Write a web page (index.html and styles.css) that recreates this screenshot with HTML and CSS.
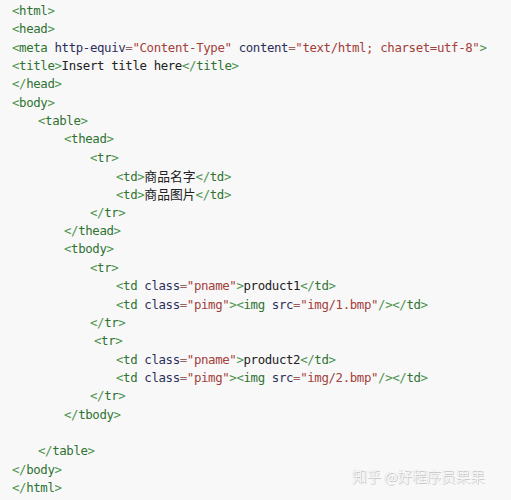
FILE: index.html
```html
<!DOCTYPE html>
<html>
<head>
<meta charset="utf-8">
<link rel="stylesheet" href="styles.css">
</head>
<body>
<div class="code">
<div class="ln l0"><span class="b">&lt;</span><span class="t">html</span><span class="b">&gt;</span></div>
<div class="ln l0"><span class="b">&lt;</span><span class="t">head</span><span class="b">&gt;</span></div>
<div class="ln l0"><span class="b">&lt;</span><span class="t">meta</span> <span class="a">http-equiv</span><span class="e">=</span><span class="v">"Content-Type"</span> <span class="a">content</span><span class="e">=</span><span class="v">"text/html; charset=utf-8"</span><span class="b">&gt;</span></div>
<div class="ln l0"><span class="b">&lt;</span><span class="t">title</span><span class="b">&gt;</span><span class="x">Insert title here</span><span class="b">&lt;/</span><span class="t">title</span><span class="b">&gt;</span></div>
<div class="ln l0"><span class="b">&lt;/</span><span class="t">head</span><span class="b">&gt;</span></div>
<div class="ln l0"><span class="b">&lt;</span><span class="t">body</span><span class="b">&gt;</span></div>
<div class="ln l1"><span class="b">&lt;</span><span class="t">table</span><span class="b">&gt;</span></div>
<div class="ln l2"><span class="b">&lt;</span><span class="t">thead</span><span class="b">&gt;</span></div>
<div class="ln l3"><span class="b">&lt;</span><span class="t">tr</span><span class="b">&gt;</span></div>
<div class="ln l4"><span class="b">&lt;</span><span class="t">td</span><span class="b">&gt;</span><span class="cjk">商品名字</span><span class="b">&lt;/</span><span class="t">td</span><span class="b">&gt;</span></div>
<div class="ln l4"><span class="b">&lt;</span><span class="t">td</span><span class="b">&gt;</span><span class="cjk">商品图片</span><span class="b">&lt;/</span><span class="t">td</span><span class="b">&gt;</span></div>
<div class="ln l3"><span class="b">&lt;/</span><span class="t">tr</span><span class="b">&gt;</span></div>
<div class="ln l2"><span class="b">&lt;/</span><span class="t">thead</span><span class="b">&gt;</span></div>
<div class="ln l2"><span class="b">&lt;</span><span class="t">tbody</span><span class="b">&gt;</span></div>
<div class="ln l3"><span class="b">&lt;</span><span class="t">tr</span><span class="b">&gt;</span></div>
<div class="ln l4"><span class="b">&lt;</span><span class="t">td</span> <span class="a">class</span><span class="e">=</span><span class="v">"pname"</span><span class="b">&gt;</span><span class="x">product1</span><span class="b">&lt;/</span><span class="t">td</span><span class="b">&gt;</span></div>
<div class="ln l4"><span class="b">&lt;</span><span class="t">td</span> <span class="a">class</span><span class="e">=</span><span class="v">"pimg"</span><span class="b">&gt;&lt;</span><span class="t">img</span> <span class="a">src</span><span class="e">=</span><span class="v">"img/1.bmp"</span><span class="b">/&gt;&lt;/</span><span class="t">td</span><span class="b">&gt;</span></div>
<div class="ln l3"><span class="b">&lt;/</span><span class="t">tr</span><span class="b">&gt;</span></div>
<div class="ln l3 nudge"><span class="b">&lt;</span><span class="t">tr</span><span class="b">&gt;</span></div>
<div class="ln l4"><span class="b">&lt;</span><span class="t">td</span> <span class="a">class</span><span class="e">=</span><span class="v">"pname"</span><span class="b">&gt;</span><span class="x">product2</span><span class="b">&lt;/</span><span class="t">td</span><span class="b">&gt;</span></div>
<div class="ln l4"><span class="b">&lt;</span><span class="t">td</span> <span class="a">class</span><span class="e">=</span><span class="v">"pimg"</span><span class="b">&gt;&lt;</span><span class="t">img</span> <span class="a">src</span><span class="e">=</span><span class="v">"img/2.bmp"</span><span class="b">/&gt;&lt;/</span><span class="t">td</span><span class="b">&gt;</span></div>
<div class="ln l3"><span class="b">&lt;/</span><span class="t">tr</span><span class="b">&gt;</span></div>
<div class="ln l2"><span class="b">&lt;/</span><span class="t">tbody</span><span class="b">&gt;</span></div>
<div class="ln l0"></div>
<div class="ln l1"><span class="b">&lt;/</span><span class="t">table</span><span class="b">&gt;</span></div>
<div class="ln l0"><span class="b">&lt;/</span><span class="t">body</span><span class="b">&gt;</span></div>
<div class="ln l0"><span class="b">&lt;/</span><span class="t">html</span><span class="b">&gt;</span></div>
</div>
<div class="mark">知乎 @好程序员果果</div>
</body>
</html>
```
FILE: styles.css
```css
html, body {
  margin: 0;
  padding: 0;
  background: #f8f8f8;
  width: 511px;
  height: 500px;
  overflow: hidden;
}
body {
  position: relative;
}
.code {
  padding: 2px 0 0 12px;
  font-family: "DejaVu Sans Mono", "Liberation Mono", monospace;
  font-size: 12.4px;
  letter-spacing: -0.38px;
  color: #222;
}
.ln {
  height: 18.35px;
  line-height: 18.35px;
  white-space: pre;
}
.l1 { padding-left: 26px; }
.l2 { padding-left: 52px; }
.l3 { padding-left: 78px; }
.l4 { padding-left: 104px; }
.nudge { padding-left: 82px; }
.b { color: #4f9450; }
.t { color: #2f7232; }
.a { color: #2c2f5c; }
.e { color: #9a6060; }
.v { color: #a3403a; }
.x { color: #222; }
.cjk {
  font-family: "Noto Sans CJK SC", sans-serif;
  font-size: 12.8px;
  letter-spacing: 0;
  color: #222;
}
.mark {
  position: absolute;
  left: 352px;
  top: 465px;
  font-family: "Noto Sans CJK SC", sans-serif;
  font-size: 14.5px;
  font-weight: 300;
  color: #fafafa;
  text-shadow: 1px 1px 0 #c4c4c4, -0.5px -0.5px 0 #d8d8d8;
}
```
